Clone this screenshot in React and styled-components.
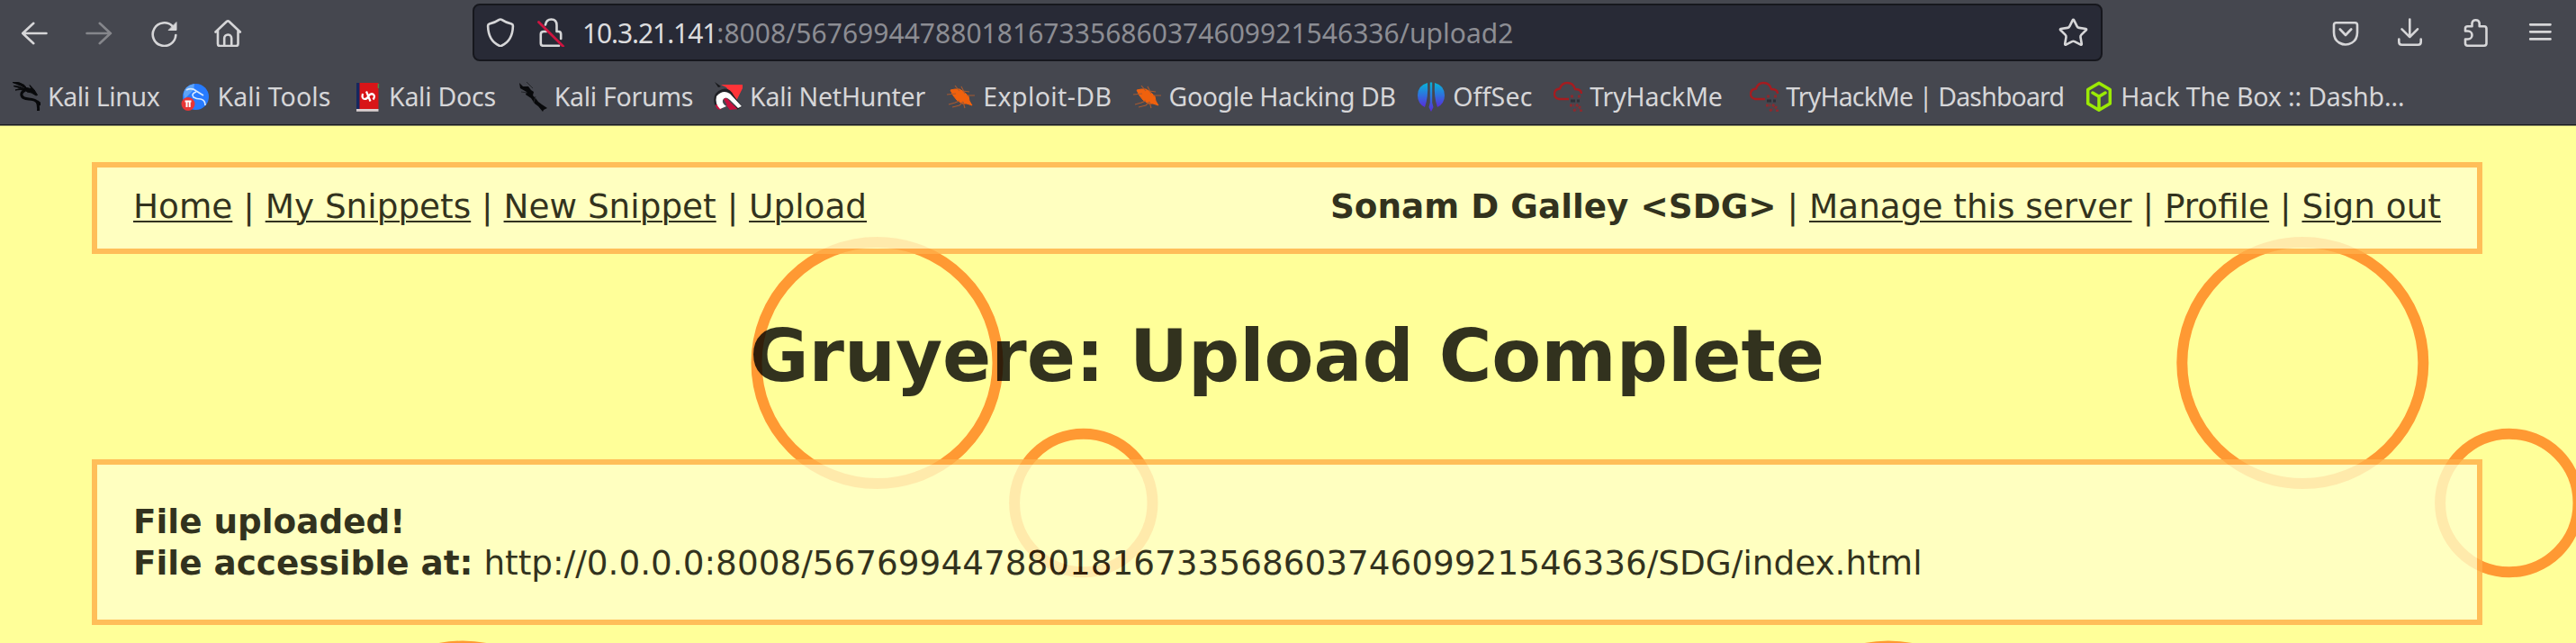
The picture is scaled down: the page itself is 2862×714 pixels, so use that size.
import React from "react";
import styled, { createGlobalStyle } from "styled-components";
import { Star } from "lucide-react";

const GlobalStyle = createGlobalStyle`
  *, *::before, *::after { box-sizing: border-box; }
  html, body { margin: 0; padding: 0; background: #ffff99; overflow: hidden; }
`;

const Browser = styled.div`
  display: flex;
  flex-direction: column;
  width: 100%;
  height: 714px;
  overflow: hidden;
`;

const Chrome = styled.header`
  display: flex;
  flex-direction: column;
  flex: none;
  height: 140px;
  background: #45474f;
  border-bottom: 1px solid #85865f;
  box-shadow: inset 0 -1px 0 #191a1f;
  color: #d6d6d8;
  font-family: "Noto Sans", "Open Sans", sans-serif;
`;

const Toolbar = styled.div`
  display: flex;
  align-items: center;
  height: 72px;
  padding: 0 24px 0 22px;
`;

const IconGroup = styled.div`
  display: flex;
  align-items: center;
  gap: 40px;
  margin-left: ${(p) => (p.$end ? "auto" : 0)};
`;

const Glyph = styled.svg`
  display: block;
  flex: none;
  width: 32px;
  height: 32px;
  fill: none;
  stroke: ${(p) => (p.$dim ? "#85868b" : "#d6d6d8")};
  stroke-width: 2.6;
  stroke-linecap: round;
  stroke-linejoin: round;
`;

const AddressBar = styled.div`
  display: flex;
  align-items: center;
  width: 1811px;
  height: 64px;
  margin-left: 255px;
  padding: 0 13px;
  border: 2px solid #16171d;
  border-radius: 8px;
  background: #282a36;
`;

const SiteIcons = styled.div`
  display: flex;
  gap: 24px;
`;

const Address = styled.div`
  flex: 1;
  margin-left: 19px;
  padding-top: 1px;
  font-size: 30px;
  line-height: 42px;
  white-space: nowrap;
`;

const Host = styled.span`
  color: #dcdcde;
  letter-spacing: -1.1px;
`;

const Path = styled.span`
  color: #8c8d93;
  letter-spacing: 0.03px;
`;

const Bookmarks = styled.nav`
  display: flex;
  align-items: center;
  height: 62px;
  margin-top: 4px;
  padding-left: 13px;
`;

const Bookmark = styled.a`
  display: flex;
  align-items: center;
  flex: none;
  gap: 8px;
  width: ${(p) => p.$width}px;
  font-size: 28.5px;
  line-height: 40px;
  letter-spacing: ${(p) => p.$tracking}px;
  white-space: nowrap;
`;

const Favicon = styled.svg`
  display: block;
  flex: none;
  width: 32px;
  height: 34px;
`;

const Page = styled.main`
  position: relative;
  flex: 1;
  background: #ffff99;
  color: #000;
  font-family: "DejaVu Sans", sans-serif;
  font-size: 37.36px;
  line-height: 46px;
`;

const Holes = styled.svg`
  position: absolute;
  inset: 0;
  width: 2862px;
  height: 574px;
`;

const Content = styled.div`
  position: relative;
  display: flex;
  flex-direction: column;
  padding: 40px 104px 0 102px;
  opacity: 0.8;
`;

const MenuPanel = styled.div`
  display: flex;
  justify-content: space-between;
  height: 102px;
  padding: 20px 40px;
  border: 6px solid #ffaf4a;
  background: #ffffca;
  white-space: nowrap;
`;

const MenuLink = styled.a`
  text-decoration: underline;
  text-decoration-thickness: 2px;
  text-underline-offset: 3px;
`;

const Title = styled.h1`
  margin: 67px 0;
  font-size: 80px;
  line-height: 94px;
  font-weight: bold;
  text-align: center;
`;

const ResultPanel = styled.section`
  height: 184px;
  padding: 40px;
  border: 6px solid #ffaf4a;
  background: #ffffca;
`;

const KaliIcon = () => (
  <Favicon viewBox="0 0 32 34">
    <path d="M1 1.5 Q8 0 14 4.5 L17 8.5 Q13 7 10 5 Q5 3 1 1.5Z M2 5.5 Q8 5 15 9 Q9 8 2 5.5Z M4 10 Q9 7 15 10 Q9 9 4 10Z M14 7 Q20 8 22 9 L20 4.5 Q26 10 28.5 15.5 L27 16 Q22 12 17 12 Z" fill="#08090b" stroke="#08090b" strokeWidth="1" />
    <path d="M16 9.5 Q10 12 11 16 Q12 19.5 19 20 Q26 20.5 28 23 Q30 26 29.5 33 M26 22 Q31 23 32 27" fill="none" stroke="#08090b" strokeWidth="3" />
  </Favicon>
);

const ToolsIcon = () => (
  <Favicon viewBox="0 0 32 34">
    <circle cx="16.5" cy="17.5" r="14.5" fill="#277bff" />
    <path d="M3 14 Q4 5 15 3 L14 10 L4 20Z" fill="#5ea4f8" />
    <path d="M6 10 Q12 7 17 11 L25 16 M17 12 Q11 14 14 18 Q17 20 22 20 Q27 21 27 27" fill="none" stroke="#d5e9ff" strokeWidth="1.7" />
    <circle cx="8" cy="25.5" r="7.5" fill="#e83535" />
    <path d="M4.5 22.5 H11.5 M6.5 22.5 V29 M9.7 22.5 V29" stroke="#fff" strokeWidth="2" fill="none" />
  </Favicon>
);

const DocsIcon = () => (
  <Favicon viewBox="0 0 32 34">
    <rect x="4" y="2" width="4" height="30" fill="#16275f" />
    <rect x="7.5" y="2" width="21" height="29" fill="#d81518" />
    <rect x="4" y="31" width="24.5" height="2.8" fill="#d9cfd0" />
    <path d="M28.4 3 V8" stroke="#4c8c45" strokeWidth="1.5" />
    <path d="M11 14 Q9.5 19.5 13 20 Q16 20 17.5 16.5 Q20 13 23 15 Q25 17 22.5 20.5 M15 11.5 L19.5 22.5" fill="none" stroke="#fff" strokeWidth="2.2" />
  </Favicon>
);

const ForumsIcon = () => (
  <Favicon viewBox="0 0 32 34">
    <path d="M1 2 L5 6 L11 6 L14 10 L17 12 L16 16 L19 19 L22 23 L26 26 L32 30 L28 32 L27 34 L22 28 L18 25 L14 19 L8 15 L9 12 L2 8 Z" fill="#08090b" />
    <path d="M9 1 L16 8 M3 12 L10 13 M19 17 L17 24" stroke="#24262a" strokeWidth="1" />
  </Favicon>
);

const NetHunterIcon = () => (
  <Favicon viewBox="0 0 32 34">
    <path d="M8 4 H32 V8 L25 22 L14 7Z" fill="#ff3338" />
    <path d="M1 1 L8 6 L5 7Z" fill="#17181b" />
    <path d="M1 24 L10 29 L7 32 Q2 31 1 24Z M17 24 L27 31 L18 32 L14 27Z" fill="#c8103e" />
    <path d="M4 26 Q1 15 10 12 Q16 10 20 18 L29 30" fill="none" stroke="#202126" strokeWidth="6" />
    <path d="M7 31 Q1 25 3 17 Q10 9 18 14 L31 28 L27 30 L18 21 Q13 16 10 21 Q9 25 14 28Z" fill="#fff" />
    <path d="M11 20 Q14 17 17 22 L24 29 L18 32Z" fill="#c8103e" />
  </Favicon>
);

const BugIcon = () => (
  <Favicon viewBox="0 0 32 34">
    <path d="M4 10 L9 9 L14 9 L19 12 L24 17 L25 22 L28 27 L22 25 L17 25 L11 21 L7 16Z" fill="#f0610d" stroke="#f0610d" strokeLinejoin="round" />
    <path d="M9 5 L14 11 M16 6 L20 14 M0 15 L10 14 M2 26 L9 24 L14 22 M6 29 L14 27 L18 23 M20 30 L18 23 M22 16 L31 16 M18 11 L25 12" fill="none" stroke="#a85a30" strokeWidth="1.1" />
  </Favicon>
);

const OffSecIcon = () => (
  <Favicon viewBox="0 0 32 34">
    <defs>
      <linearGradient id="offsec" x1="0" y1="0" x2="0" y2="1">
        <stop offset="0" stopColor="#08b4d8" />
        <stop offset="0.5" stopColor="#2d73dc" />
        <stop offset="1" stopColor="#5a2bdc" />
      </linearGradient>
    </defs>
    <path d="M12 2 Q1 5 1 16 Q1 25 9 29 Q13 18 12 2Z M20 2 Q31 5 31 16 Q31 25 23 29 Q19 18 20 2Z" fill="url(#offsec)" />
    <path d="M14.8 1.5 H17.2 V24 L18.5 29 L16 34 L13.5 29 L14.8 24Z" fill="url(#offsec)" />
  </Favicon>
);

const TryHackMeIcon = () => (
  <Favicon viewBox="0 0 32 34">
    <path d="M17 20 H6 Q1 19 1 14.5 Q1 9 7 8.5 Q9 2 15.5 2 Q22 2 24 9 Q31 9 31 14" fill="none" stroke="#a51c20" strokeWidth="2.3" />
    <path d="M19 17 H23 M27 17 H31 M18 27 H23 M25 26 L30 30 M22 33 L26 31 M29 33 H32" stroke="#8a2a2f" strokeWidth="3" strokeDasharray="3 1" />
    <path d="M19 22 H24 M26 22 H29" stroke="#2d3037" strokeWidth="3" />
  </Favicon>
);

const HackTheBoxIcon = () => (
  <Favicon viewBox="0 0 32 34">
    <path d="M16 2.3 L28.3 9.5 V25 L16 32.2 L3.7 25 V9.5Z M9 13 L16 17.2 L23 13 M16 17.2 V32" fill="none" stroke="#9bea05" strokeWidth="3.5" strokeLinejoin="round" strokeLinecap="round" />
  </Favicon>
);

const bookmarks = [
  { label: "Kali Linux", Icon: KaliIcon, width: 188.4, tracking: -0.4 },
  { label: "Kali Tools", Icon: ToolsIcon, width: 190.6, tracking: 0.1 },
  { label: "Kali Docs", Icon: DocsIcon, width: 183.7, tracking: -0.25 },
  { label: "Kali Forums", Icon: ForumsIcon, width: 217.3, tracking: -0.27 },
  { label: "Kali NetHunter", Icon: NetHunterIcon, width: 259.3, tracking: -0.23 },
  { label: "Exploit-DB", Icon: BugIcon, width: 206.3, tracking: 0.4 },
  { label: "Google Hacking DB", Icon: BugIcon, width: 315.6, tracking: -0.4 },
  { label: "OffSec", Icon: OffSecIcon, width: 152.1, tracking: 0.2 },
  { label: "TryHackMe", Icon: TryHackMeIcon, width: 218, tracking: -0.12 },
  { label: "TryHackMe | Dashboard", Icon: TryHackMeIcon, width: 371.9, tracking: -0.85 },
  { label: "Hack The Box :: Dashb…", Icon: HackTheBoxIcon, width: 360, tracking: -0.17 },
];

const BrowserChrome = () => (
  <Chrome>
    <Toolbar>
      <IconGroup>
        <Glyph><path d="M3.2 17 H29.5 M15.3 5.8 L3.2 17 L15.3 28.2" /></Glyph>
        <Glyph $dim><path d="M2.5 17 H29 M16.7 5.8 L28.8 17 L16.7 28.2" /></Glyph>
        <Glyph>
          <path d="M25.5 9 A12.8 12.8 0 1 0 29.3 19" />
          <path d="M30 5 V13.5 H21.5Z" fill="#d6d6d8" strokeWidth="1" />
        </Glyph>
        <Glyph>
          <path d="M1.5 15.5 L14 3.8 Q15.2 2.8 16.4 3.8 L28.8 15.5 M4 14 V28.7 Q4 31 6.3 31 H24 Q26.5 31 26.5 28.7 V14 M11.2 31 V22.5 A4 4 0 0 1 19.2 22.5 V31" />
        </Glyph>
      </IconGroup>
      <AddressBar>
        <SiteIcons>
          <Glyph>
            <path d="M14.6 1.9 Q16 1 17.4 1.9 Q21.5 4.8 28.3 6.6 Q30 7.2 29.9 9 C29.6 20 24.5 27.5 17.3 30.7 Q16 31.2 14.7 30.7 C7.5 27.5 2.4 20 2.1 9 Q2 7.2 3.7 6.6 Q10.5 4.8 14.6 1.9Z" />
          </Glyph>
          <Glyph>
            <path d="M10 7.5 Q11 1.5 16.5 1.5 Q22.5 1.5 22.5 8 V15 M22.5 15 H24.5 Q27.2 15 27.2 18 V23 M8 15 Q4.8 15 4.8 18 V28 Q4.8 30.8 7.5 30.8 H25 M8 15 H11" />
            <path d="M2.5 4.5 L29.7 31.5" stroke="#cf1440" strokeWidth="2.8" />
          </Glyph>
        </SiteIcons>
        <Address>
          <Host>10.3.21.141</Host>
          <Path>:8008/567699447880181673356860374609921546336/upload2</Path>
        </Address>
        <Star size={35} strokeWidth={1.8} />
      </AddressBar>
      <IconGroup $end>
        <Glyph>
          <path d="M5.5 5.2 H26.5 Q29 5.2 29 7.7 V16 Q29 24 23 27.5 Q16 31.5 9 27.5 Q3 24 3 16 V7.7 Q3 5.2 5.5 5.2Z M9.8 12.5 L16 19 L22.2 12.5" />
        </Glyph>
        <Glyph>
          <path d="M15.3 1.5 V21 M6.5 12.3 L15.3 21.2 L24 12.3 M3.3 23.5 V26.5 Q3.3 29.7 6.5 29.7 H24.5 Q27.7 29.7 27.7 26.5 V23.5" />
        </Glyph>
        <Glyph>
          <path d="M5 14.5 V11.5 Q5 9.2 7.5 9.2 H12.5 V5.5 A4.2 4.2 0 0 1 20.7 5.5 V9.2 H26 Q28.5 9.2 28.5 11.7 V28.3 Q28.5 30.7 26 30.7 H7.5 Q5 30.7 5 28.3 V23.5 H8 A4.3 4.3 0 0 0 8 14.5 Z" />
        </Glyph>
        <Glyph><path d="M5.2 7.3 H27.5 M5.2 15.3 H27.5 M5.2 23.4 H27.5" strokeWidth="2.7" /></Glyph>
      </IconGroup>
    </Toolbar>
    <Bookmarks>
      {bookmarks.map(({ label, Icon, width, tracking }) => (
        <Bookmark key={label} $width={width} $tracking={tracking}>
          <Icon />
          <span>{label}</span>
        </Bookmark>
      ))}
    </Bookmarks>
  </Chrome>
);

export default function App() {
  return (
    <Browser>
      <GlobalStyle />
      <BrowserChrome />
      <Page>
        <Holes viewBox="0 0 2862 574" fill="none" stroke="#ff9933" strokeWidth="12">
          <circle cx="974.5" cy="263" r="134" />
          <circle cx="2558.3" cy="263" r="134" />
          <circle cx="1203.8" cy="418.5" r="76.7" />
          <circle cx="2787.8" cy="418.5" r="76.7" />
          <circle cx="514" cy="711.5" r="134" />
          <circle cx="2098" cy="711.5" r="134" />
        </Holes>
        <Content>
          <MenuPanel>
            <div>
              <MenuLink>Home</MenuLink> | <MenuLink>My Snippets</MenuLink> | <MenuLink>New Snippet</MenuLink> | <MenuLink>Upload</MenuLink>
            </div>
            <div>
              <b>Sonam D Galley &lt;SDG&gt;</b> | <MenuLink>Manage this server</MenuLink> | <MenuLink>Profile</MenuLink> | <MenuLink>Sign out</MenuLink>
            </div>
          </MenuPanel>
          <Title>Gruyere: Upload Complete</Title>
          <ResultPanel>
            <b>File uploaded!</b>
            <br />
            <b>File accessible at:</b> http://0.0.0.0:8008/567699447880181673356860374609921546336/SDG/index.html
          </ResultPanel>
        </Content>
      </Page>
    </Browser>
  );
}
